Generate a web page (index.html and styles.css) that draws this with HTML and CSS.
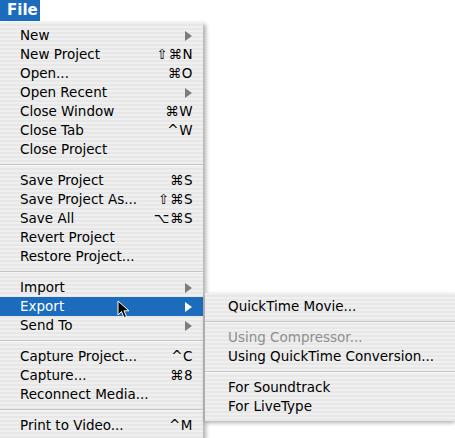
FILE: index.html
```html
<!DOCTYPE html>
<html>
<head>
<meta charset="utf-8">
<link rel="stylesheet" href="styles.css">
</head>
<body>
<div class="bar"><span class="title">File</span></div>
<div class="menu">
  <div class="item"><span>New</span><span class="arrow"></span></div>
  <div class="item"><span>New Project</span><span class="key">⇧⌘N</span></div>
  <div class="item"><span>Open...</span><span class="key">⌘O</span></div>
  <div class="item"><span>Open Recent</span><span class="arrow"></span></div>
  <div class="item"><span>Close Window</span><span class="key">⌘W</span></div>
  <div class="item"><span>Close Tab</span><span class="key">^W</span></div>
  <div class="item"><span>Close Project</span></div>
  <div class="sep"></div>
  <div class="item"><span>Save Project</span><span class="key">⌘S</span></div>
  <div class="item"><span>Save Project As...</span><span class="key">⇧⌘S</span></div>
  <div class="item"><span>Save All</span><span class="key">⌥⌘S</span></div>
  <div class="item"><span>Revert Project</span></div>
  <div class="item"><span>Restore Project...</span></div>
  <div class="sep"></div>
  <div class="item"><span>Import</span><span class="arrow"></span></div>
  <div class="item active"><span>Export</span><span class="arrow"></span>
    <div class="submenu">
      <div class="item sub"><span>QuickTime Movie...</span></div>
      <div class="sep"></div>
      <div class="item sub disabled"><span>Using Compressor...</span></div>
      <div class="item sub"><span>Using QuickTime Conversion...</span></div>
      <div class="sep"></div>
      <div class="item sub"><span>For Soundtrack</span></div>
      <div class="item sub"><span>For LiveType</span></div>
    </div>
    <svg class="cursor" width="14" height="20" viewBox="0 0 14 20"><path d="M1 1 L1 15 L4.5 11.5 L7 17.5 L9.5 16.5 L7 10.8 L12 10.8 Z" fill="#000" stroke="#fff" stroke-width="1"/></svg>
  </div>
  <div class="item"><span>Send To</span><span class="arrow"></span></div>
  <div class="sep"></div>
  <div class="item"><span>Capture Project...</span><span class="key">^C</span></div>
  <div class="item"><span>Capture...</span><span class="key">⌘8</span></div>
  <div class="item"><span>Reconnect Media...</span></div>
  <div class="sep"></div>
  <div class="item"><span>Print to Video...</span><span class="key">^M</span></div>
</div>
</body>
</html>
```
FILE: styles.css
```css
html, body {
  margin: 0;
  padding: 0;
  background: #ffffff;
  overflow: hidden;
}
body {
  width: 455px;
  height: 438px;
  font-family: "DejaVu Sans", "Liberation Sans", sans-serif;
  font-size: 13.5px;
  color: #000;
}
.bar {
  height: 22px;
}
.title {
  display: inline-block;
  height: 21px;
  width: 40px;
  box-sizing: border-box;
  padding-left: 7px;
  line-height: 21px;
  background: #1b6cbd;
  color: #fff;
  font-weight: bold;
  font-size: 15px;
}
.menu {
  position: relative;
  width: 203px;
  padding: 4px 0 5px;
  background: repeating-linear-gradient(#efefef 0 2px, #e7e7e7 2px 4px);
  box-shadow: 3px 2px 4px rgba(0,0,0,0.3);
}
.item {
  position: relative;
  height: 19px;
  line-height: 19px;
  padding: 0 10px 0 20px;
  display: flex;
  justify-content: space-between;
  align-items: center;
  white-space: nowrap;
}
.key {
  letter-spacing: 0.5px;
}
.arrow {
  width: 0;
  height: 0;
  border-top: 5px solid transparent;
  border-bottom: 5px solid transparent;
  border-left: 7px solid #7d7d7d;
  margin-right: 1px;
}
.active {
  background: #1b6cbd;
  color: #fff;
}
.active > .arrow {
  border-left-color: #fff;
}
.sep {
  height: 12px;
  position: relative;
}
.sep::after {
  content: "";
  position: absolute;
  left: 0;
  right: 0;
  top: 5px;
  height: 1px;
  background: #c4c4c4;
  box-shadow: 0 1px 0 #f8f8f8;
}
.submenu {
  position: absolute;
  left: 205px;
  top: -4px;
  width: 250px;
  padding: 4px 0 5px;
  background: repeating-linear-gradient(#efefef 0 2px, #e7e7e7 2px 4px);
  color: #000;
  box-shadow: 0 2px 4px rgba(0,0,0,0.3);
}
.item.sub {
  padding-left: 23px;
}
.disabled {
  color: #8e8e8e;
}
.cursor {
  position: absolute;
  left: 117px;
  top: 3px;
}
```
